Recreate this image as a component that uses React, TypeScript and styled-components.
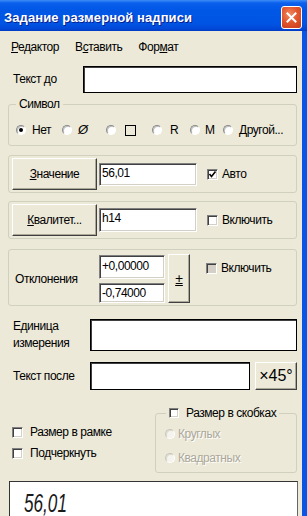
import styled, { createGlobalStyle } from "styled-components";

const GlobalStyle = createGlobalStyle`
  html, body {
    margin: 0;
    padding: 0;
    background: #ECE9D8;
  }
  body {
    font-family: "Liberation Sans", Arial, sans-serif;
    font-size: 12px;
    color: #000;
  }
  * {
    box-sizing: border-box;
  }
`;

const Window = styled.div`
  width: 307px;
  height: 516px;
  overflow: hidden;
  display: flex;
  flex-direction: column;
`;

const TitleBar = styled.div`
  height: 31px;
  flex: none;
  display: flex;
  align-items: center;
  justify-content: space-between;
  padding: 0 5px 0 4px;
  background: linear-gradient(#3D8EF7 0px, #0B60EC 3px, #0057E6 10px, #0054E3 24px, #0047D6 29px, #003BC2 31px);
`;

const Title = styled.span`
  color: #fff;
  font: bold 13px "Liberation Sans", Arial, sans-serif;
  letter-spacing: 0.1px;
  text-shadow: 1px 1px 0 #0A1E8C;
  padding-top: 3px;
`;

const CloseButton = styled.div`
  width: 21px;
  height: 23px;
  margin-top: 3px;
  border: 1px solid #fff;
  border-radius: 3px;
  background: radial-gradient(circle at 40% 35%, #F08A64 0%, #E2572E 45%, #C8391A 100%);
  display: flex;
  align-items: center;
  justify-content: center;
`;

const Body = styled.div`
  flex: 1;
  min-height: 0;
  display: flex;
  flex-direction: column;
  background: #ECE9D8;
  border-right: 5px solid #0A55E3;
  padding: 0 5px 0 8px;
  letter-spacing: -0.45px;
`;

const MenuBar = styled.div`
  height: 30px;
  flex: none;
  display: flex;
  align-items: center;
  gap: 16px;
  padding: 2px 0 0 3px;
`;

const MenuItem = styled.span`
  line-height: 14px;
`;

const FieldRow = styled.div<{ $top: number }>`
  display: flex;
  align-items: center;
  margin-top: ${(p) => p.$top}px;
`;

const FieldLabel = styled.div<{ $w: number }>`
  width: ${(p) => p.$w}px;
  flex: none;
  padding-left: 5px;
  line-height: 17px;
`;

const TextBox = styled.div<{ $h: number; $w?: number }>`
  height: ${(p) => p.$h}px;
  ${(p) => (p.$w ? `width: ${p.$w}px; flex: none;` : "flex: 1;")}
  background: #fff;
  border: 1px solid #000;
  box-shadow: inset 1px 1px 0 #404040;
`;

const Group = styled.fieldset<{ $top: number; $pad: string; $w?: number }>`
  margin: ${(p) => p.$top}px 0 0 0;
  padding: ${(p) => p.$pad};
  border: 1px solid #D0D0BF;
  border-radius: 3px;
  min-width: 0;
  ${(p) => (p.$w ? `width: ${p.$w}px; flex: none;` : "")}
`;

const Legend = styled.legend<{ $ml?: number }>`
  padding: 0 3px;
  margin-left: ${(p) => p.$ml ?? 0}px;
  line-height: 14px;
`;

const RadioGrid = styled.div`
  display: grid;
  grid-template-columns: 46px 44px 46px 38px 33px auto;
  align-items: center;
`;

const RadioItem = styled.label<{ $gap?: number; $disabled?: boolean }>`
  display: flex;
  align-items: center;
  gap: ${(p) => p.$gap ?? 6}px;
  line-height: 14px;
  white-space: nowrap;
  color: ${(p) => (p.$disabled ? "#ACA899" : "#000")};
  text-shadow: ${(p) => (p.$disabled ? "1px 1px 0 #fff" : "none")};
`;

const Radio = styled.span<{ $checked?: boolean; $disabled?: boolean }>`
  width: 10px;
  height: 10px;
  flex: none;
  border-radius: 50%;
  display: inline-flex;
  align-items: center;
  justify-content: center;
  background: ${(p) => (p.$disabled ? "#F4F3EE" : "#fff")};
  border: 1px solid;
  border-color: ${(p) => (p.$disabled ? "#C9C7BA #fff #fff #C9C7BA" : "#8A8A8A #fff #fff #8A8A8A")};
  box-shadow: ${(p) => (p.$disabled ? "inset 1px 1px 0 #DCDAD0" : "inset 1px 1px 0 #C0C0C0")};

  &::after {
    content: "";
    display: ${(p) => (p.$checked ? "block" : "none")};
    width: 4px;
    height: 4px;
    border-radius: 50%;
    background: #000;
  }
`;

const Diameter = styled.span`
  font-size: 13px;
  font-style: italic;
`;

const SquareMark = styled.span`
  width: 11px;
  height: 11px;
  border: 1px solid #000;
  margin-left: 3px;
`;

const ValueGroup = styled.div<{ $top: number }>`
  margin-top: ${(p) => p.$top}px;
  display: flex;
  align-items: center;
  border: 1px solid #D0D0BF;
  border-radius: 3px;
  padding: 2px 3px;
`;

const PushButton = styled.button<{ $w: number; $h: number; $size?: number; $ml?: number }>`
  width: ${(p) => p.$w}px;
  height: ${(p) => p.$h}px;
  flex: none;
  margin: 0 0 0 ${(p) => p.$ml ?? 0}px;
  padding: 0;
  font-family: inherit;
  font-size: ${(p) => p.$size ?? 12}px;
  letter-spacing: ${(p) => (p.$size ? "0" : "-0.45px")};
  color: #000;
  background: #ECE9D8;
  border: 1px solid;
  border-color: #fff #404040 #404040 #fff;
  box-shadow: inset -1px -1px 0 #ACA899;
`;

const SunkenInput = styled.div<{ $w: number; $h: number; $ml?: number; $pt?: number }>`
  width: ${(p) => p.$w}px;
  height: ${(p) => p.$h}px;
  flex: none;
  margin-left: ${(p) => p.$ml ?? 0}px;
  background: #fff;
  border: 1px solid;
  border-color: #808080 #fff #fff #808080;
  box-shadow: inset 1px 1px 0 #404040, inset -1px -1px 0 #D4D0C8;
  padding: ${(p) => p.$pt ?? 2}px 0 0 2px;
  line-height: 14px;
  white-space: nowrap;
`;

const CheckRow = styled.label<{ $ml?: number; $gap?: number; $top?: number }>`
  display: flex;
  align-items: center;
  gap: ${(p) => p.$gap ?? 4}px;
  margin-left: ${(p) => p.$ml ?? 0}px;
  margin-top: ${(p) => p.$top ?? 0}px;
  line-height: 14px;
  white-space: nowrap;
  align-self: ${(p) => (p.$top ? "flex-start" : "auto")};
`;

const CheckBox = styled.span<{ $shade?: boolean; $size?: number }>`
  width: ${(p) => p.$size ?? 11}px;
  height: ${(p) => p.$size ?? 11}px;
  flex: none;
  display: inline-flex;
  align-items: center;
  justify-content: center;
  background: ${(p) => (p.$shade ? "#D4D0C8" : "#fff")};
  border: 1px solid;
  border-color: #808080 #fff #fff #808080;
  box-shadow: inset 1px 1px 0 #404040, inset -1px -1px 0 #D4D0C8;
`;

const DeviationGroup = styled.div`
  margin-top: 10px;
  display: flex;
  align-items: center;
  border: 1px solid #D0D0BF;
  border-radius: 3px;
  padding: 4px 3px 2px 3px;
`;

const DeviationLabel = styled.div`
  width: 87px;
  flex: none;
  padding-left: 3px;
`;

const InputStack = styled.div`
  display: flex;
  flex-direction: column;
  gap: 4px;
`;

const BottomArea = styled.div`
  display: flex;
  align-items: flex-start;
`;

const LeftChecks = styled.div`
  width: 147px;
  flex: none;
  padding: 35px 0 0 4px;
  display: flex;
  flex-direction: column;
  gap: 7px;
`;

const RadioStack = styled.div`
  display: flex;
  flex-direction: column;
  gap: 10px;
`;

const Preview = styled.div`
  margin: 8px 0 0 1px;
  width: 289px;
  flex: 1;
  min-height: 0;
  background: #fff;
  border: 1px solid;
  border-bottom: none;
  border-color: #333 #666 #666 #333;
  padding: 11px 0 0 14px;
  overflow: hidden;
`;

const PreviewText = styled.span`
  display: inline-block;
  font-family: "Liberation Sans", sans-serif;
  font-style: italic;
  font-size: 26px;
  line-height: 20px;
  letter-spacing: 0;
  color: #1a1a1a;
  transform: scaleX(0.66);
  transform-origin: left top;
`;

const Check = () => (
  <svg width="9" height="9" viewBox="0 0 9 9">
    <polyline points="1.5,4 3.5,6.5 7.5,1.5" fill="none" stroke="#000" strokeWidth="1.6" />
  </svg>
);

export default function App() {
  return (
    <>
      <GlobalStyle />
      <Window>
        <TitleBar>
          <Title>Задание размерной надписи</Title>
          <CloseButton>
            <svg width="11" height="11" viewBox="0 0 11 11">
              <path d="M1.5 1.5 L9.5 9.5 M9.5 1.5 L1.5 9.5" stroke="#fff" strokeWidth="2" strokeLinecap="square" />
            </svg>
          </CloseButton>
        </TitleBar>
        <Body>
          <MenuBar>
            <MenuItem><u>Р</u>едактор</MenuItem>
            <MenuItem>В<u>с</u>тавить</MenuItem>
            <MenuItem>Фор<u>м</u>ат</MenuItem>
          </MenuBar>

          <FieldRow $top={5}>
            <FieldLabel $w={75}>Текст до</FieldLabel>
            <TextBox $h={27} />
          </FieldRow>

          <Group $top={4} $pad="12px 0 8px 7px">
            <Legend>Символ</Legend>
            <RadioGrid>
              <RadioItem><Radio $checked />Нет</RadioItem>
              <RadioItem><Radio /><Diameter>Ø</Diameter></RadioItem>
              <RadioItem><Radio /><SquareMark /></RadioItem>
              <RadioItem $gap={8}><Radio />R</RadioItem>
              <RadioItem $gap={5}><Radio />M</RadioItem>
              <RadioItem><Radio />Другой...</RadioItem>
            </RadioGrid>
          </Group>

          <ValueGroup $top={9}>
            <PushButton $w={85} $h={32}><u>З</u>начение</PushButton>
            <SunkenInput $w={98} $h={23} $ml={2}>56,01</SunkenInput>
            <CheckRow $ml={10}><CheckBox><Check /></CheckBox>Авто</CheckRow>
          </ValueGroup>

          <ValueGroup $top={8}>
            <PushButton $w={85} $h={32}><u>К</u>валитет...</PushButton>
            <SunkenInput $w={98} $h={24} $ml={2}>h14</SunkenInput>
            <CheckRow $ml={10}><CheckBox />Включить</CheckRow>
          </ValueGroup>

          <DeviationGroup>
            <DeviationLabel>Отклонения</DeviationLabel>
            <InputStack>
              <SunkenInput $w={66} $h={24} $pt={3}>+0,00000</SunkenInput>
              <SunkenInput $w={66} $h={20}>-0,74000</SunkenInput>
            </InputStack>
            <PushButton $w={22} $h={49} $ml={3} $size={14}><u>±</u></PushButton>
            <CheckRow $ml={16} $top={7}><CheckBox $shade />Включить</CheckRow>
          </DeviationGroup>

          <FieldRow $top={12}>
            <FieldLabel $w={82}>Единица<br />измерения</FieldLabel>
            <TextBox $h={32} />
          </FieldRow>

          <FieldRow $top={10}>
            <FieldLabel $w={82}>Текст после</FieldLabel>
            <TextBox $h={28} $w={160} />
            <PushButton $w={42} $h={28} $ml={5} $size={16}>×45°</PushButton>
          </FieldRow>

          <BottomArea>
            <LeftChecks>
              <CheckRow $gap={7}><CheckBox />Размер в рамке</CheckRow>
              <CheckRow $gap={7}><CheckBox />Подчеркнуть</CheckRow>
            </LeftChecks>
            <Group $top={16} $pad="7px 0 7px 9px" $w={142}>
              <Legend $ml={1}>
                <CheckRow $gap={7}><CheckBox $size={10} />Размер в скобках</CheckRow>
              </Legend>
              <RadioStack>
                <RadioItem $gap={3} $disabled><Radio $disabled />Круглых</RadioItem>
                <RadioItem $gap={3} $disabled><Radio $disabled />Квадратных</RadioItem>
              </RadioStack>
            </Group>
          </BottomArea>

          <Preview>
            <PreviewText>56,01</PreviewText>
          </Preview>
        </Body>
      </Window>
    </>
  );
}
